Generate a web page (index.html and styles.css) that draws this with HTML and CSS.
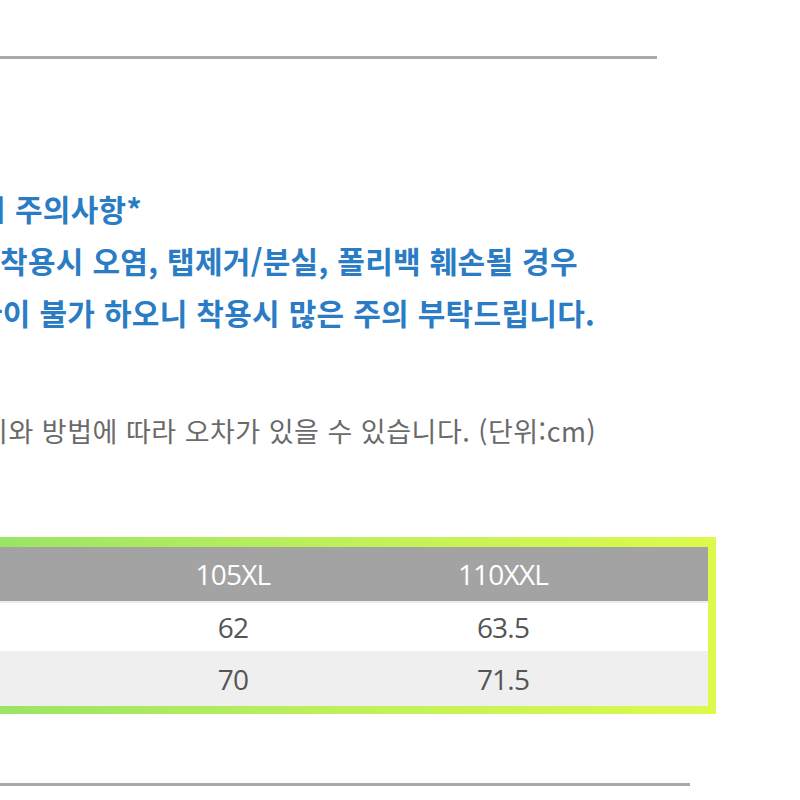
FILE: index.html
```html
<!DOCTYPE html>
<html lang="ko">
<head>
<meta charset="utf-8">
<link rel="stylesheet" href="styles.css">
</head>
<body>
<div class="page">
  <div class="rule rule-top"></div>
  <div class="notice">
    <p class="nline n1">*착용시 주의사항*</p>
    <p class="nline n2">착용시 오염, 탭제거/분실, 폴리백 훼손될 경우</p>
    <p class="nline n3">교환이 불가 하오니 착용시 많은 주의 부탁드립니다.</p>
  </div>
  <p class="measure">측정 위치와 방법에 따라 오차가 있을 수 있습니다. (단위:cm)</p>
  <div class="frame">
    <div class="table">
      <div class="row head">
        <div class="cell lab">사이즈</div>
        <div class="cell">105XL</div>
        <div class="cell">110XXL</div>
        <div class="cell"></div>
      </div>
      <div class="row odd">
        <div class="cell lab">어깨</div>
        <div class="cell">62</div>
        <div class="cell">63.5</div>
        <div class="cell"></div>
      </div>
      <div class="row even">
        <div class="cell lab">가슴</div>
        <div class="cell">70</div>
        <div class="cell">71.5</div>
        <div class="cell"></div>
      </div>
    </div>
  </div>
  <div class="rule rule-bottom"></div>
</div>
</body>
</html>
```

FILE: styles.css
```css
html, body {
  margin: 0;
  padding: 0;
  background: #ffffff;
}
.page {
  width: 800px;
  height: 800px;
  overflow: hidden;
  padding-top: 56px;
  box-sizing: border-box;
}
.rule {
  height: 3px;
  background: #a9a9a9;
}
.rule-top {
  width: 657px;
}
.rule-bottom {
  width: 690px;
  margin-top: 69px;
}
.notice {
  margin-top: 123px;
  overflow: hidden;
}
.nline {
  margin: 0;
  white-space: nowrap;
  font-family: "Noto Sans CJK KR", "Noto Sans", sans-serif;
  font-weight: 700;
  font-size: 30px;
  line-height: 52px;
  color: #2a7cc4;
  letter-spacing: 0.3px;
}
.n1 { margin-left: -93px; }
.n2 { margin-left: 0; }
.n3 { margin-left: -53px; }
.measure {
  margin: 75px 0 0 -101px;
  white-space: nowrap;
  font-family: "Noto Sans CJK KR", "Noto Sans", sans-serif;
  font-size: 27px;
  line-height: 36px;
  color: #6a6a6a;
  letter-spacing: 0.5px;
}
.frame {
  margin-top: 88px;
  margin-left: -20px;
  width: 736px;
  padding: 8px;
  box-sizing: border-box;
  background: linear-gradient(90deg, #98e466 0%, #bff05a 50%, #dcfa4c 100%);
}
.table {
  background: #ffffff;
}
.row {
  display: grid;
  grid-template-columns: 110px 270px 270px 70px;
  align-items: center;
  font-family: "Open Sans", "Noto Sans", sans-serif;
  font-size: 28px;
  letter-spacing: -0.8px;
}
.cell {
  text-align: center;
}
.head {
  height: 54px;
  margin-top: 2px;
  background: #a3a3a3;
  color: #ffffff;
}
.odd {
  height: 48px;
  background: #ffffff;
  color: #555555;
  border-top: 2px solid #ececec;
}
.even {
  height: 55px;
  background: #efefef;
  color: #555555;
}
.lab {
  color: transparent;
}
```
